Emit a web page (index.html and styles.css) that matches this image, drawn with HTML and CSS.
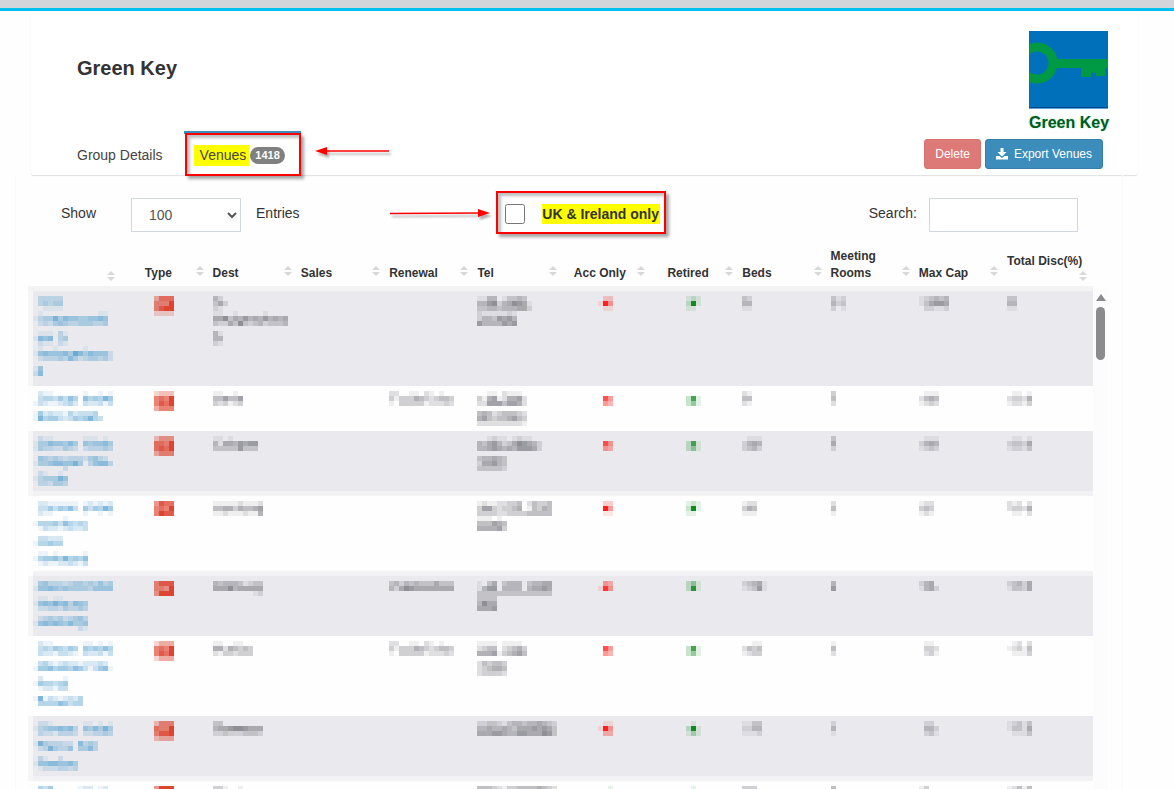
FILE: index.html
```html
<!DOCTYPE html>
<html lang="en">
<head>
    <meta charset="UTF-8">
    <meta name="viewport" content="width=device-width, initial-scale=1.0">
    <title>Green Key - Venues</title>
    <link rel="stylesheet" href="styles.css">
</head>
<body>
    <div class="topbar"></div>

    <header class="group-card">
        <div class="group-head">
            <h1>Green Key</h1>
            <div class="brand">
                <svg class="brand-logo" viewBox="0 0 79 78">
                    <rect width="79" height="78" fill="#0070ba"/>
                    <rect y="76" width="79" height="1" fill="#004a8c"/>
                    <rect y="77" width="79" height="1" fill="#5fa3d8"/>
                    <circle cx="8" cy="32" r="16" fill="none" stroke="#009a44" stroke-width="9"/>
                    <path d="M27 28H79V37H76V45H67V42H66L62 41V46H52V37H27Z" fill="#009a44"/>
                </svg>
                <span class="brand-name">Green Key</span>
            </div>
        </div>
        <div class="group-nav">
            <nav class="tabs">
                <a href="#details" class="tab">Group Details</a>
                <a href="#venues" class="tab active"><span class="mark">Venues</span><span class="badge">1418</span></a>
                <svg class="arrow arrow-left" viewBox="0 0 80 14">
                    <path d="M12 6L74 6" stroke="#f00" stroke-width="1.5"/>
                    <path d="M0 6L12 2V10Z" fill="#f00"/>
                </svg>
            </nav>
            <div class="actions">
                <button type="button" class="btn btn-danger">Delete</button>
                <button type="button" class="btn btn-primary">
                    <svg class="icon" viewBox="0 0 12 12">
                        <path d="M4.500 0H7.500V4H10.500L6 8.500L1.500 4H4.500Z" fill="#fff"/>
                        <path d="M0 8H3.500L6 10L8.500 8H12V11.500H0Z" fill="#fff"/>
                    </svg>
                    Export Venues
                </button>
            </div>
        </div>
    </header>

    <main class="panel">
        <div class="toolbar">
            <div class="length">
                <label for="length">Show</label>
                <select id="length">
                    <option>100</option>
                    <option>250</option>
                    <option>500</option>
                </select>
                <span>Entries</span>
            </div>
            <div class="region">
                <svg class="arrow arrow-right" viewBox="0 0 102 14">
                    <path d="M0 6.500L90 6" stroke="#f00" stroke-width="1.5"/>
                    <path d="M100 6L88 2V10Z" fill="#f00"/>
                </svg>
                <input type="checkbox" id="ukOnly">
                <label for="ukOnly">UK &amp; Ireland only</label>
            </div>
            <div class="search">
                <label for="search">Search:</label>
                <input type="text" id="search">
            </div>
        </div>

        <div class="table-wrap">
            <table class="venues">
                <colgroup>
                    <col span="11" class="col">
                    <col>
                </colgroup>
                <thead>
                    <tr>
                        <th class="low"></th>
                        <th class="center">Type</th>
                        <th>Dest</th>
                        <th>Sales</th>
                        <th>Renewal</th>
                        <th>Tel</th>
                        <th class="center">Acc Only</th>
                        <th class="center">Retired</th>
                        <th>Beds</th>
                        <th>Meeting Rooms</th>
                        <th>Max Cap</th>
                        <th class="low last">Total Disc(%)</th>
                    </tr>
                </thead>
                <tbody>
                    <tr>
                        <td><span class="mosaic link" data-cells="033333/034344/001111/010000000000011/134474655445565/023245433444334//01110310/1656034/0211021/010010000010/1565556486465552/0233343642344342//15/26/"></span></td>
                        <td class="center"><span class="mosaic type" data-cells="4777/6669/6899/2222"></span></td>
                        <td><span class="mosaic" data-cells="42/352/21/110010000010/557354645464545/322537323423334//41/44/21"></span></td>
                        <td></td>
                        <td></td>
                        <td><span class="mosaic" data-cells="1144013343/44672457651/33443444552/21111121/24436564/64444656"></span></td>
                        <td class="center"><span class="mosaic no" data-cells="022/194/011"></span></td>
                        <td class="center"><span class="mosaic yes" data-cells="121/291/110"></span></td>
                        <td><span class="mosaic" data-cells="32/44/11"></span></td>
                        <td><span class="mosaic" data-cells="312/423/201"></span></td>
                        <td><span class="mosaic" data-cells="123434/135665/022112"></span></td>
                        <td><span class="mosaic" data-cells="33/44/11"></span></td>
                    </tr>
                    <tr>
                        <td><span class="mosaic link" data-cells="0211000000100101/0344353640645475/1321123420322313//1523221423334/17455323545743/"></span></td>
                        <td class="center"><span class="mosaic type" data-cells="2333/6769/6879/4666"></span></td>
                        <td><span class="mosaic" data-cells="110010/446446/323123"></span></td>
                        <td></td>
                        <td><span class="mosaic" data-cells="2200110210100/3133354323443/1033333122232"></span></td>
                        <td><span class="mosaic" data-cells="0011021110/3156125562/2266646652//4542344432/5643445643/2222222221"></span></td>
                        <td class="center"><span class="mosaic no" data-cells="/074/043"></span></td>
                        <td class="center"><span class="mosaic yes" data-cells="/271/241"></span></td>
                        <td><span class="mosaic" data-cells="21/44/21"></span></td>
                        <td><span class="mosaic" data-cells="3/4/2"></span></td>
                        <td><span class="mosaic" data-cells="0111/2454/1232"></span></td>
                        <td><span class="mosaic" data-cells="01101/23325/12213"></span></td>
                    </tr>
                    <tr class="soft">
                        <td><span class="mosaic link" data-cells="0211000000111010/1446554640545564/1433224320233343//0543432333245320/1445665574035663/0000002/0210010/1344475/0332443/"></span></td>
                        <td class="center"><span class="mosaic type" data-cells="3555/7769/7879/4666"></span></td>
                        <td><span class="mosaic" data-cells="11010/415546566/333336333"></span></td>
                        <td></td>
                        <td></td>
                        <td><span class="mosaic" data-cells="001211012110/4356423576542/4456545466652//344543/255643/333332"></span></td>
                        <td class="center"><span class="mosaic no" data-cells="/074/043"></span></td>
                        <td class="center"><span class="mosaic yes" data-cells="/271/241"></span></td>
                        <td><span class="mosaic" data-cells="0111/2454/2342"></span></td>
                        <td><span class="mosaic" data-cells="3/5/2"></span></td>
                        <td><span class="mosaic" data-cells="0111/2454/1232"></span></td>
                        <td><span class="mosaic" data-cells="01101/23325/12213"></span></td>
                    </tr>
                    <tr class="soft">
                        <td><span class="mosaic link" data-cells="0221111110121212/0335354630535475/0211000000100101/0000001/14445364343/01322123223//033222/144544//01101000001/14556474546/01211223213/"></span></td>
                        <td class="center"><span class="mosaic type" data-cells="5877/6769/6988"></span></td>
                        <td><span class="mosaic" data-cells="1111121112/4455354456/1121112115"></span></td>
                        <td></td>
                        <td></td>
                        <td><span class="mosaic" data-cells="121122334024334/366323345014354/333322333344444/111010/444654/555563"></span></td>
                        <td class="center"><span class="mosaic no" data-cells="022/094/011"></span></td>
                        <td class="center"><span class="mosaic yes" data-cells="121/291/110"></span></td>
                        <td><span class="mosaic" data-cells="122/354/111"></span></td>
                        <td><span class="mosaic" data-cells="2/4/1"></span></td>
                        <td><span class="mosaic" data-cells="122/343/121"></span></td>
                        <td><span class="mosaic" data-cells="21202/23325/01102"></span></td>
                    </tr>
                    <tr>
                        <td><span class="mosaic link" data-cells="0453332344343534/1556545444435555//0110110/15657563654/02233243343//02343423453/15656546445/00000000021"></span></td>
                        <td class="center"><span class="mosaic type" data-cells="6888/6659/5999"></span></td>
                        <td><span class="mosaic" data-cells="4344431233/5557455555/0000000012"></span></td>
                        <td></td>
                        <td><span class="mosaic" data-cells="3424343335333/4257655555555"></span></td>
                        <td><span class="mosaic" data-cells="103503444034455/146604444045565/333333333333333/3333/4755/5556"></span></td>
                        <td class="center"><span class="mosaic no" data-cells="043/184"></span></td>
                        <td class="center"><span class="mosaic yes" data-cells="241/281"></span></td>
                        <td><span class="mosaic" data-cells="23451/12361"></span></td>
                        <td><span class="mosaic" data-cells="4/6"></span></td>
                        <td><span class="mosaic" data-cells="2450/1452"></span></td>
                        <td><span class="mosaic" data-cells="23425/13325"></span></td>
                    </tr>
                    <tr>
                        <td><span class="mosaic link" data-cells="0211000000110101/0343543540545464/0322133210322313//0342123221222320/1556455465313561//0200001/1544345/0122133//1713212324/0444465344/"></span></td>
                        <td class="center"><span class="mosaic type" data-cells="2444/6769/6879/2444"></span></td>
                        <td><span class="mosaic" data-cells="110011/55254343/21332333"></span></td>
                        <td></td>
                        <td><span class="mosaic" data-cells="2200110210100/3133354323443/1033333122232"></span></td>
                        <td><span class="mosaic" data-cells="1111011110/2344023453/5556134564//243443/234554/233332"></span></td>
                        <td class="center"><span class="mosaic no" data-cells="/074/043"></span></td>
                        <td class="center"><span class="mosaic yes" data-cells="/271/241"></span></td>
                        <td><span class="mosaic" data-cells="0011/24340/1233"></span></td>
                        <td><span class="mosaic" data-cells="1/4/2"></span></td>
                        <td><span class="mosaic" data-cells="0110/0332/0231"></span></td>
                        <td><span class="mosaic" data-cells="01202/12314/01113"></span></td>
                    </tr>
                    <tr class="soft">
                        <td><span class="mosaic link" data-cells="0221000000110101/1345565630546474/0322133320223343//1743332206343/0237433504463//0310020/155665564/012223323/"></span></td>
                        <td class="center"><span class="mosaic type" data-cells="3666/7669/6889/3444"></span></td>
                        <td><span class="mosaic" data-cells="33/4556776555/2232223332"></span></td>
                        <td></td>
                        <td></td>
                        <td><span class="mosaic" data-cells="2233213443445432/4454454355565653/5556654466555763"></span></td>
                        <td class="center"><span class="mosaic no" data-cells="011/194/033"></span></td>
                        <td class="center"><span class="mosaic yes" data-cells="010/291/131"></span></td>
                        <td><span class="mosaic" data-cells="1133/2244/1112"></span></td>
                        <td><span class="mosaic" data-cells="2/4/1"></span></td>
                        <td><span class="mosaic" data-cells="0220/0442/0231"></span></td>
                        <td><span class="mosaic" data-cells="12313/13315/01113"></span></td>
                    </tr>
                    <tr>
                        <td><span class="mosaic link" data-cells="0435000001220120"></span></td>
                        <td class="center"><span class="mosaic type" data-cells="5999"></span></td>
                        <td><span class="mosaic" data-cells="331001"></span></td>
                        <td></td>
                        <td></td>
                        <td><span class="mosaic" data-cells="4443213344445432"></span></td>
                        <td class="center"><span class="mosaic yes" data-cells="001"></span></td>
                        <td class="center"><span class="mosaic yes" data-cells="010"></span></td>
                        <td><span class="mosaic" data-cells="333"></span></td>
                        <td><span class="mosaic" data-cells="4"></span></td>
                        <td><span class="mosaic" data-cells="130"></span></td>
                        <td><span class="mosaic" data-cells="12414"></span></td>
                    </tr>
                </tbody>
            </table>
            <div class="scrollbar">
                <div class="scroll-up"></div>
                <div class="scroll-thumb"></div>
            </div>
        </div>
    </main>

    <script src="script.js"></script>
</body>
</html>
```

FILE: styles.css
```css
* {
    box-sizing: border-box;
}

body {
    font-family: "Liberation Sans", Arial, sans-serif;
    font-size: 14px;
    margin: 0;
    height: 100vh;
    overflow: hidden;
    background: #fefefe;
    color: #333;
}

.topbar {
    height: 11px;
    background: #d2d6da;
    border-bottom: 3px solid #00c0ef;
}

.group-card {
    margin: 0 36px 0 31px;
    padding: 20px 30px 0 31px;
    background: #fff;
    border-radius: 3px;
    box-shadow: 0 1px 1px rgba(0, 0, 0, 0.12);
}

.group-head {
    display: flex;
    justify-content: space-between;
    height: 100px;
}

.group-head h1 {
    margin: 0;
    padding: 25px 15px 0;
    font-size: 20px;
    line-height: 24px;
}

.brand {
    width: 79px;
}

.brand-logo {
    display: block;
    width: 79px;
    height: 78px;
}

.brand-name {
    display: block;
    font-size: 16px;
    font-weight: bold;
    line-height: 28px;
    white-space: nowrap;
    color: #005a22;
    text-shadow: 0 0 2px #9fe8b8;
}

.group-nav {
    display: flex;
    justify-content: space-between;
    align-items: flex-start;
}

.tabs {
    display: flex;
    gap: 5px;
    position: relative;
}

.tab {
    display: flex;
    align-items: center;
    height: 44px;
    padding: 1px 16px 0 15px;
    border-top: 3px solid transparent;
    color: #444;
    text-decoration: none;
}

.tab.active {
    position: relative;
    border-top-color: #3c8dbc;
}

/* red callout frames */
.tab.active::after,
.region::after {
    content: "";
    position: absolute;
    border: 2px solid #f00;
    box-shadow: 3px 3px 3px rgba(0, 0, 0, 0.35), inset 3px 3px 3px rgba(0, 0, 0, 0.25);
    pointer-events: none;
}

.tab.active::after {
    inset: -1px 0 -1px 1px;
}

.mark {
    margin-left: -5px;
    padding: 0 3px 0 6px;
    line-height: 21px;
    background: #ff0;
}

.badge {
    margin-left: 1px;
    padding: 0 5px;
    border-radius: 9px;
    font-size: 11px;
    font-weight: bold;
    line-height: 17px;
    background: #808080;
    color: #fff;
}

.arrow {
    position: absolute;
    overflow: visible;
    filter: drop-shadow(2px 3px 1px rgba(0, 0, 0, 0.3));
}

.arrow-left {
    left: 100%;
    top: 14px;
    width: 80px;
    height: 14px;
    margin-left: 14px;
}

.arrow-right {
    right: 100%;
    top: 9px;
    width: 102px;
    height: 14px;
    margin-right: 13px;
}

.actions {
    display: flex;
    gap: 4px;
    padding: 8px 5px 0 0;
}

.btn {
    display: flex;
    align-items: center;
    gap: 6px;
    height: 30px;
    padding: 0 10px;
    border: 1px solid #367fa9;
    border-radius: 3px;
    font-family: inherit;
    font-size: 12px;
    color: #fff;
    cursor: pointer;
}

.btn-primary {
    background: #3c8dbc;
}

.btn-danger {
    background: #dd7a77;
    border-color: #d9736f;
}

.icon {
    width: 12px;
    height: 12px;
}

.panel {
    margin: 0 51px 0 15px;
    border: 1px solid #fafafa;
    border-width: 0 1px;
}

.toolbar {
    display: flex;
    justify-content: space-between;
    padding: 23px 44px 0 45px;
    line-height: 30px;
}

.length,
.search {
    display: flex;
}

.length select {
    width: 110px;
    height: 34px;
    margin: 0 15px 0 35px;
    padding: 0 0 0 13px;
    border: 1px solid #d2d6de;
    border-radius: 0;
    background: #fff;
    font-family: inherit;
    font-size: 14px;
    color: #555;
}

.search input {
    width: 149px;
    height: 34px;
    margin-left: 12px;
    padding: 6px 12px;
    border: 1px solid #d2d6de;
    font-size: 14px;
}

.region {
    display: flex;
    align-items: center;
    position: relative;
    height: 32px;
    margin-right: 3px;
}

.region::after {
    inset: -7px -6px -4px -9px;
}

.region input {
    width: 20px;
    height: 20px;
    margin: 0 17px 0 0;
}

.region label {
    padding-right: 1px;
    line-height: 20px;
    font-weight: bold;
    background: #ff0;
}

.table-wrap {
    display: flex;
    align-items: stretch;
    margin: 16px 14px 0 12px;
}

.venues {
    flex: 1;
    table-layout: fixed;
    border-spacing: 0;
}

.col {
    width: 8.29%;
}

.venues th {
    position: relative;
    padding: 0 12px 4px 8px;
    border-bottom: 5px solid #f3f3f3;
    font-size: 12px;
    line-height: 17px;
    text-align: left;
    vertical-align: bottom;
}

.venues th.center {
    text-align: center;
}

.venues th.last {
    padding: 0 0 16px 8px;
    white-space: nowrap;
}

/* sort arrows */
.venues th::before,
.venues th::after {
    content: "";
    position: absolute;
    right: 1px;
    border: 4px solid transparent;
}

.venues th::before {
    bottom: 16px;
    border-top: 0;
    border-bottom-color: #d8d8d8;
}

.venues th::after {
    bottom: 10px;
    border-bottom: 0;
    border-top-color: #d8d8d8;
}

.venues th.low::before {
    bottom: 11px;
}

.venues th.low::after {
    bottom: 5px;
}

.venues th.last::before,
.venues th.last::after {
    right: 6px;
}

.venues td {
    padding: 5px 0 5px 8px;
    vertical-align: top;
}

.venues td:first-child {
    padding-left: 0;
    border-left: 5px solid #fdfdfd;
}

.venues td.center {
    padding-left: 7px;
    text-align: center;
}

.venues tbody tr:nth-child(odd) {
    background: #eaeaee;
}

.venues tbody tr:nth-child(odd) td:first-child {
    border-left-color: #f6f6f7;
}

.venues tr.soft td {
    box-shadow: inset 0 -5px #f2f2f5;
}

/* redacted values */
.mosaic {
    display: inline-block;
    vertical-align: top;
    color: #74747c;
}

.mosaic svg {
    display: block;
}

.mosaic.link {
    color: #5ba3d0;
}

.mosaic.type {
    color: #dd4532;
}

.mosaic.no {
    color: #ff201c;
}

.mosaic.yes {
    color: #128a22;
}

.scrollbar {
    display: flex;
    flex-direction: column;
    align-items: center;
    width: 15px;
    margin-top: 41px;
    padding-top: 5px;
    background: #fcfcfc;
}

.scroll-up {
    border: 5px solid transparent;
    border-top: 0;
    border-bottom: 7px solid #8b8b8b;
}

.scroll-thumb {
    width: 9px;
    height: 53px;
    margin-top: 6px;
    border-radius: 5px;
    background: #8b8b8b;
}
```

FILE: script.js
```js
// Each digit is one 5px block, 0 = empty and 9 = solid. Rows are split by "/".
const SIZE = 5;
const NS = 'http://www.w3.org/2000/svg';

document.querySelectorAll('.mosaic').forEach(el => {
    const rows = el.dataset.cells.split('/');
    const cols = Math.max(...rows.map(row => row.length));
    const svg = document.createElementNS(NS, 'svg');
    svg.setAttribute('width', cols * SIZE);
    svg.setAttribute('height', rows.length * SIZE);
    svg.setAttribute('shape-rendering', 'crispEdges');

    rows.forEach((row, y) => {
        [...row].forEach((level, x) => {
            if (level === '0') return;
            const rect = document.createElementNS(NS, 'rect');
            rect.setAttribute('x', x * SIZE);
            rect.setAttribute('y', y * SIZE);
            rect.setAttribute('width', SIZE);
            rect.setAttribute('height', SIZE);
            rect.setAttribute('fill', 'currentColor');
            rect.setAttribute('fill-opacity', level / 9);
            svg.appendChild(rect);
        });
    });

    el.appendChild(svg);
});
```
